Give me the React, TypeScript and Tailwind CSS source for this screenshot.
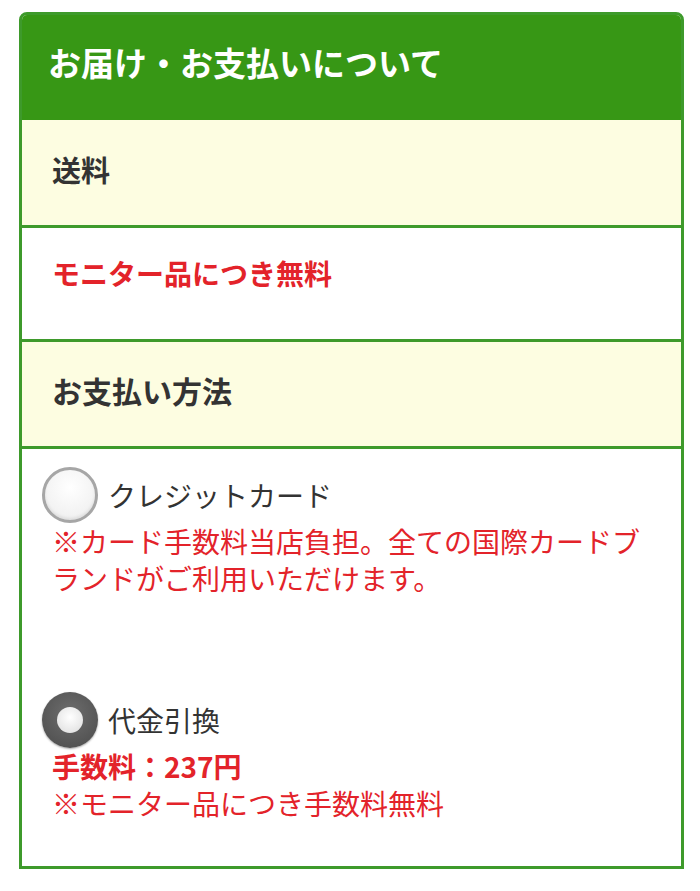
const font = { fontFamily: '"Noto Sans CJK JP", "Noto Sans", sans-serif' };

function Radio({ checked }: { checked?: boolean }) {
  if (checked) {
    return (
      <div className="flex h-[56px] w-[56px] shrink-0 items-center justify-center rounded-full bg-[radial-gradient(circle_at_50%_40%,#6e6e6e,#4a4a4a)] shadow-[0_1px_2px_rgba(0,0,0,0.35)]">
        <div className="h-[26px] w-[26px] rounded-full bg-[radial-gradient(circle_at_50%_40%,#ffffff,#dcdcdc)]" />
      </div>
    );
  }
  return (
    <div className="h-[56px] w-[56px] shrink-0 rounded-full border-[3px] border-[#a6a6a6] bg-[radial-gradient(circle_at_50%_35%,#ffffff,#ececec)] shadow-[inset_0_-2px_3px_rgba(0,0,0,0.08)]" />
  );
}

export default function App() {
  return (
    <div className="min-h-[891px] bg-white pl-[19px] pr-[16px] pt-[12px]" style={font}>
      <div className="overflow-hidden rounded-t-[8px] border-[3px] border-[#3e9a2b]">
        {/* Header */}
        <div className="-mx-[3px] -mt-[3px] flex h-[108px] items-center bg-[#379715] pb-[6px] pl-[29px]">
          <h2 className="text-[33px] font-bold text-white">お届け・お支払いについて</h2>
        </div>

        {/* Shipping */}
        <div className="flex h-[108px] items-center border-b-[3px] border-[#3e9a2b] bg-[#fdfde1] px-[30px] pb-[6px]">
          <span className="text-[29px] font-bold text-[#333]">送料</span>
        </div>
        <div className="h-[114px] border-b-[3px] border-[#3e9a2b] bg-white px-[30px] pt-[27px]">
          <span className="text-[28px] font-bold leading-[37px] text-[#e3232a]">モニター品につき無料</span>
        </div>

        {/* Payment */}
        <div className="flex h-[107px] items-center border-b-[3px] border-[#3e9a2b] bg-[#fdfde1] px-[30px] pb-[8px]">
          <span className="text-[30px] font-bold text-[#333]">お支払い方法</span>
        </div>
        <div className="bg-white pl-[20px] pr-[30px] pt-[18px] pb-[44px]">
          <div>
            <div className="flex items-center gap-[10px]">
              <Radio />
              <span className="text-[28px] text-[#333]">クレジットカード</span>
            </div>
            <p className="pl-[10px] text-[28px] leading-[37px] text-[#e3232a]">
              ※カード手数料当店負担。全ての国際カードブランドがご利用いただけます。
            </p>
          </div>
          <div className="mt-[95px]">
            <div className="flex items-center gap-[10px]">
              <Radio checked />
              <span className="text-[28px] text-[#333]">代金引換</span>
            </div>
            <p className="pl-[10px] text-[28px] font-bold leading-[37px] text-[#e3232a]">手数料：237円</p>
            <p className="pl-[10px] text-[28px] leading-[37px] text-[#e3232a]">※モニター品につき手数料無料</p>
          </div>
        </div>
      </div>
    </div>
  );
}
